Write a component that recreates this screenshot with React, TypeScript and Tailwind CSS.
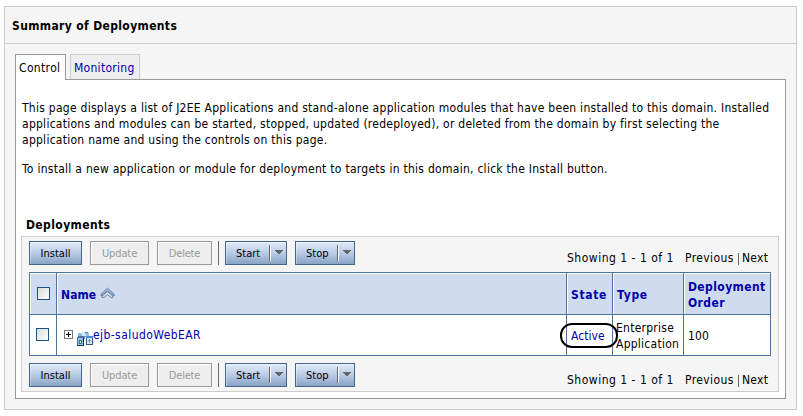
import type { ReactNode } from "react";

function Button({ children, className }: { children: ReactNode; className: string }) {
  return (
    <button
      className={`h-[24px] shrink-0 border border-[#46658c] bg-linear-to-b from-[#e2ebfa] via-[#b4c8e3] via-55% to-[#89a3c4] p-0 text-center text-[11px] text-black shadow-[inset_1px_1px_0_rgba(255,255,255,0.35)] ${className}`}
    >
      {children}
    </button>
  );
}

function DisabledButton({ children, className }: { children: ReactNode; className: string }) {
  return (
    <button
      disabled
      className={`h-[24px] shrink-0 border border-[#999] bg-[#eee] p-0 text-center text-[11px] leading-[24px] text-[#999] shadow-[inset_1px_1px_0_#fff] ${className}`}
    >
      {children}
    </button>
  );
}

function MenuButton({ label, className }: { label: string; className: string }) {
  return (
    <Button className={`flex items-center pl-[10px] leading-[22px] ${className}`}>
      <span className="flex-1 pt-[2px] text-left">{label}</span>
      <span className="flex h-[16px] w-[17px] border-l border-[#666]">
        <span className="w-px bg-white" />
        <svg width="8" height="4" viewBox="0 0 8 4" className="mt-[5px] ml-[4px]" shapeRendering="crispEdges">
          <path d="M0 0h8v1H7v1H6v1H5v1H3V3H2V2H1V1H0z" fill="#666" />
        </svg>
      </span>
    </Button>
  );
}

function Toolbar() {
  return (
    <div className="flex h-[24px]">
      <Button className="w-[53px] leading-[24px]">Install</Button>
      <DisabledButton className="ml-[8px] w-[59px] tracking-[-0.1px]">Update</DisabledButton>
      <DisabledButton className="ml-[8px] w-[55px] tracking-[-0.2px]">Delete</DisabledButton>
      <div className="ml-[6px] h-[24px] w-px bg-[#666]" />
      <MenuButton label="Start" className="ml-[6px] w-[62px]" />
      <MenuButton label="Stop" className="ml-[8px] w-[60px]" />
      <div className="ml-[212px] flex h-[16px] pt-[9px] leading-[16px] whitespace-nowrap">
        <span className="w-[118px] tracking-[0.5px]">Showing 1 - 1 of 1</span>
        <span className="w-[53px] tracking-[0.4px]">Previous</span>
        <span className="mt-[3px] h-[12px] w-px bg-[#666]" />
        <span className="ml-[3px] tracking-[0.25px]">Next</span>
      </div>
    </div>
  );
}

function Checkbox() {
  return <div className="h-[13px] w-[13px] border border-[#1c5180] bg-linear-to-br from-[#dcdcd7] to-white" />;
}

function SortIcon() {
  return (
    <svg width="15" height="12" viewBox="0 0 15 12" className="mt-[8px] ml-[4px]">
      <path d="M1 7 7.5 1.2 14 7v2L7.5 4 1 9z" fill="#a9bfdc" stroke="#526f99" strokeWidth=".8" />
      <path d="M2 9.2 7.5 4.6 13 9.2v1.2h-2L7.5 7.6 4 10.4H2z" fill="#dce8f7" stroke="#536781" strokeWidth=".8" />
    </svg>
  );
}

function ModuleIcon() {
  return (
    <svg width="16" height="14" viewBox="0 0 16 14" className="mt-[8px] shrink-0" shapeRendering="crispEdges">
      <path d="M1 1h4v3H1zM8 1h4v4H8z" fill="#8dbbe6" />
      <path d="M4 0h4v2H4zM5 2h4v2H5z" fill="#d3e7f8" />
      <path d="M8 0h3v1H8zM5 4h3v3H5z" fill="#4c86bd" />
      <path d="M1 4h5v1h1v9H0V5h1z" fill="#4a7396" />
      <path d="M6 6h1v8H0v-1h6z" fill="#16304e" />
      <path d="M1 6h5v7H1z" fill="#8fc3ea" />
      <path d="M2 8h3v4H2z" fill="#268452" />
      <path d="M3 9h1v2H3z" fill="#dff1dc" />
      <path d="M9 4h7v9H9z" fill="#33597f" />
      <path d="M9 4h7v2H9z" fill="#438bd4" />
      <path d="M10 6h5v6h-5z" fill="#d9e4ef" />
      <path d="M12 7h1v4h-1zM11 8h3v1h-3z" fill="#7891ac" />
    </svg>
  );
}

const headCell = "border-r border-[#4d749d] shadow-[inset_1px_1px_0_#fff]";
const bodyCell = "border-r border-[#4d749d]";

export default function App() {
  return (
    <div className="h-[416px] w-[803px] bg-white pt-[6px] pl-[4px] font-['DejaVu_Sans_Condensed','DejaVu_Sans',sans-serif] text-[12px] text-black">
      <div className="h-[404px] w-[793px] border border-[#ccc] bg-[#f5f5f5]">
        <h1 className="h-[37px] border-b border-[#ccc] pt-[11px] pl-[7px] text-[12px] leading-[16px] font-bold tracking-[0.36px]">
          Summary of Deployments
        </h1>
        <div className="pt-[10px] pl-[10px]">
          <div className="flex h-[25px]">
            <div className="relative z-10 h-[26px] w-[51px] border border-b-0 border-[#999] bg-white pt-[5px] pl-[3px] leading-[16px] tracking-[0.35px]">
              Control
            </div>
            <div className="ml-[4px] h-[25px] w-[70px] border border-b-0 border-[#ccc] bg-[#eee] pt-[5px] pl-[3px] leading-[16px] tracking-[0.28px] text-[#0000aa]">
              Monitoring
            </div>
          </div>
          <div className="h-[320px] w-[771px] border border-[#999] bg-white pt-[20px] pl-[5px]">
            <p className="pl-px leading-[16px] tracking-[0.266px] whitespace-nowrap">
              This page displays a list of J2EE Applications and stand-alone application modules that have been installed to this domain. Installed
              <br />
              applications and modules can be started, stopped, updated (redeployed), or deleted from the domain by first selecting the
              <br />
              application name and using the controls on this page.
            </p>
            <p className="mt-[13px] pl-px leading-[16px] tracking-[0.27px] whitespace-nowrap">
              To install a new application or module for deployment to targets in this domain, click the Install button.
            </p>
            <h2 className="mt-[40px] pl-[5px] text-[12px] leading-[16px] font-bold tracking-[0.4px]">Deployments</h2>
            <div className="mt-[3px] h-[156px] w-[758px] border border-[#ccc] bg-[#f5f5f5] pt-[4px] pl-[7px]">
              <Toolbar />
              <div className="mt-[7px] w-[742px] border border-r-0 border-[#4d749d]">
                <div className="grid h-[42px] grid-cols-[27px_510px_46px_71px_87px] border-b border-[#4d749d] bg-[#cfdcef] font-bold text-[#0000aa]">
                  <div className={`${headCell} pt-[14px] pl-[7px]`}>
                    <Checkbox />
                  </div>
                  <div className={`${headCell} flex pt-[6px] pl-[4px]`}>
                    <div className="pt-[8px] leading-[16px] tracking-[0.1px]">Name</div>
                    <SortIcon />
                  </div>
                  <div className={`${headCell} pt-[14px] pl-[4px] leading-[16px] tracking-[0.65px]`}>State</div>
                  <div className={`${headCell} pt-[14px] pl-[4px] leading-[16px] tracking-[0.7px]`}>Type</div>
                  <div className={`${headCell} pt-[6px] pl-[4px] leading-[16px] tracking-[0.4px]`}>
                    Deployment
                    <br />
                    Order
                  </div>
                </div>
                <div className="grid h-[40px] grid-cols-[27px_510px_46px_71px_87px] bg-white">
                  <div className={`${bodyCell} pt-[13px] pl-[6px]`}>
                    <Checkbox />
                  </div>
                  <div className={`${bodyCell} flex pt-[9px] pl-[7px]`}>
                    <svg width="9" height="9" viewBox="0 0 9 9" className="mt-[6px] mr-[4px] shrink-0" shapeRendering="crispEdges">
                      <path d="M0 0h9v9H0z" fill="#777" />
                      <path d="M1 1h7v7H1z" fill="#fff" />
                      <path d="M2 4h5v1H2zM4 2h1v5H4z" fill="#000" />
                    </svg>
                    <ModuleIcon />
                    <a className="pt-[3px] leading-[16px] tracking-[0.43px] text-[#0000aa]">ejb-saludoWebEAR</a>
                  </div>
                  <div className={`${bodyCell} relative pt-[13px] pl-[4px] leading-[16px] tracking-[0.05px] text-[#0000aa]`}>
                    Active
                    <div className="absolute top-[8px] left-[-7px] z-10 h-[25px] w-[58px] rounded-[12px] border-2 border-black" />
                  </div>
                  <div className={`${bodyCell} pt-[5px] pl-[3px] leading-[16px] tracking-[0.25px]`}>
                    Enterprise
                    <br />
                    Application
                  </div>
                  <div className={`${bodyCell} pt-[13px] pl-[4px] leading-[16px] tracking-[0.1px]`}>100</div>
                </div>
              </div>
              <div className="mt-[7px]">
                <Toolbar />
              </div>
            </div>
          </div>
        </div>
      </div>
    </div>
  );
}
